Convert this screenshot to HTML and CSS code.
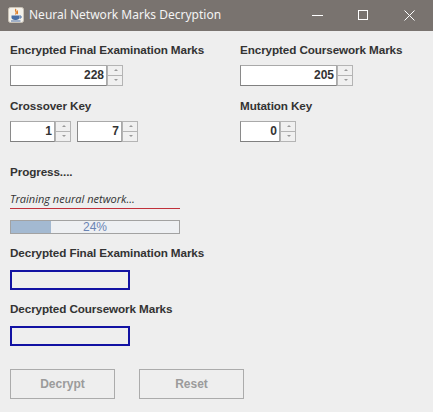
FILE: index.html
```html
<!DOCTYPE html>
<html>
<head>
<meta charset="utf-8">
<link rel="stylesheet" href="styles.css">
</head>
<body>
<div class="window">
  <div class="titlebar">
    <svg class="app-icon" width="16" height="16" viewBox="0 0 16 16">
      <rect x="0.5" y="0.5" width="15" height="15" rx="2" fill="#f4f1ea" stroke="#c9c2b6"/>
      <path d="M8 2 C6 4 10 5 7.5 7.5 M9.5 3.5 C8.5 5 10.5 5.5 9 7" stroke="#e07a20" stroke-width="1.2" fill="none"/>
      <path d="M3.5 8.5 H11.5 V10.5 C11.5 12 10 13 8 13 H7 C5 13 3.5 12 3.5 10.5 Z" fill="#4a6fa5"/>
      <path d="M11.5 9 H13 V11 H11.5" stroke="#4a6fa5" fill="none"/>
      <path d="M3 14 H12.5" stroke="#4a6fa5"/>
    </svg>
    <span class="title">Neural Network Marks Decryption</span>
    <div class="controls">
      <svg class="ctl" width="46" height="31" viewBox="0 0 46 31"><path d="M17 15.5 H28" stroke="#fff" stroke-width="1"/></svg>
      <svg class="ctl" width="46" height="31" viewBox="0 0 46 31"><rect x="17.5" y="10.5" width="9" height="9" stroke="#fff" fill="none"/></svg>
      <svg class="ctl" width="46" height="31" viewBox="0 0 46 31"><path d="M17.5 10.5 L27.5 20.5 M27.5 10.5 L17.5 20.5" stroke="#fff" fill="none"/></svg>
    </div>
  </div>
  <div class="content">
    <div class="grid">
      <div class="cell">
        <div class="label">Encrypted Final Examination Marks</div>
        <div class="spinner w113"><div class="sp-field">228</div><div class="sp-btns"><span class="sp-btn up"></span><span class="sp-btn down"></span></div></div>
      </div>
      <div class="cell">
        <div class="label">Encrypted Coursework Marks</div>
        <div class="spinner w113"><div class="sp-field">205</div><div class="sp-btns"><span class="sp-btn up"></span><span class="sp-btn down"></span></div></div>
      </div>
      <div class="cell row2">
        <div class="label">Crossover Key</div>
        <div class="pair">
          <div class="spinner w61"><div class="sp-field">1</div><div class="sp-btns"><span class="sp-btn up"></span><span class="sp-btn down"></span></div></div>
          <div class="spinner w61"><div class="sp-field">7</div><div class="sp-btns"><span class="sp-btn up"></span><span class="sp-btn down"></span></div></div>
        </div>
      </div>
      <div class="cell row2">
        <div class="label">Mutation Key</div>
        <div class="spinner w56"><div class="sp-field">0</div><div class="sp-btns"><span class="sp-btn up"></span><span class="sp-btn down"></span></div></div>
      </div>
    </div>

    <div class="label progress-label">Progress....</div>
    <div class="status">Training neural network...</div>
    <div class="progress"><div class="fill" style="width:24%"></div><span class="pct">24%</span></div>

    <div class="label dec-label">Decrypted Final Examination Marks</div>
    <div class="outbox"></div>
    <div class="label dec-label">Decrypted Coursework Marks</div>
    <div class="outbox"></div>

    <div class="buttons">
      <div class="btn">Decrypt</div>
      <div class="btn">Reset</div>
    </div>
  </div>
</div>
</body>
</html>
```
FILE: styles.css
```css
html, body {
  margin: 0;
  padding: 0;
  background: #eeeeee;
}
.window {
  width: 433px;
  height: 412px;
  background: #eeeeee;
  font-family: "Liberation Sans", Arial, sans-serif;
}
.titlebar {
  height: 31px;
  background: #79736f;
  display: flex;
  align-items: center;
}
.app-icon {
  margin-left: 8px;
  margin-right: 5px;
  margin-top: -1px;
}
.title {
  color: #f4f4f4;
  font-family: "Noto Sans", "Open Sans", sans-serif;
  font-size: 12px;
  margin-top: -2px;
}
.controls {
  margin-left: auto;
  display: flex;
}
.ctl { display: block; }
.content {
  padding: 0 10px;
}
.grid {
  display: grid;
  grid-template-columns: 230px 1fr;
  padding-top: 11px;
}
.row2 { margin-top: 12px; }
.label {
  font-size: 11.7px;
  line-height: 15px;
  font-weight: bold;
  color: #333333;
  white-space: nowrap;
  letter-spacing: -0.1px;
}
.spinner {
  margin-top: 8px;
  height: 21px;
  display: flex;
  box-sizing: border-box;
}
.w113 { width: 113px; }
.w61 { width: 61px; }
.w56 { width: 56px; }
.pair {
  display: flex;
  gap: 6px;
}
.sp-field {
  flex: 1;
  background: #ffffff;
  border: 1px solid #a9a9a9;
  border-bottom-color: #808080;
  border-left-color: #8a8a8a;
  box-sizing: border-box;
  text-align: right;
  font-size: 12px;
  font-weight: bold;
  color: #333333;
  line-height: 19px;
  padding-right: 2px;
}
.sp-btns {
  width: 16px;
  display: flex;
  flex-direction: column;
}
.sp-btn {
  flex: 1;
  border: 1px solid #b4b4b4;
  background: #f0f0f0;
  box-sizing: border-box;
  position: relative;
}
.sp-btn + .sp-btn { border-top: none; }
.sp-btn::after {
  content: "";
  position: absolute;
  left: 6px;
  width: 0;
  height: 0;
  border-left: 2px solid transparent;
  border-right: 2px solid transparent;
}
.sp-btn.up::after { top: 3px; border-bottom: 2px solid #9a9a9a; }
.sp-btn.down::after { top: 3px; border-top: 2px solid #9a9a9a; }
.progress-label { margin-top: 22px; }
.status {
  width: 170px;
  font-family: "Open Sans", "Noto Sans", sans-serif;
  font-style: italic;
  font-size: 11px;
  line-height: 15px;
  color: #333333;
  margin-top: 12px;
  padding-bottom: 2px;
  border-bottom: 1px solid #c0303a;
  white-space: nowrap;
}
.progress {
  margin-top: 11px;
  width: 170px;
  height: 14px;
  box-sizing: border-box;
  border: 1px solid #a2a2a2;
  background: #eef0f3;
  position: relative;
}
.fill {
  height: 100%;
  background: #a3b9d1;
}
.pct {
  position: absolute;
  left: 0;
  right: 0;
  top: -1px;
  text-align: center;
  font-size: 12px;
  line-height: 14px;
  color: #6a84b3;
}
.dec-label { margin-top: 11px; }
.outbox {
  margin-top: 10px;
  width: 120px;
  height: 20px;
  box-sizing: border-box;
  border: 2px solid #1212a3;
}
.buttons {
  display: flex;
  gap: 24px;
  margin-top: 23px;
}
.btn {
  width: 105px;
  height: 30px;
  box-sizing: border-box;
  border: 1px solid #ababab;
  display: flex;
  align-items: center;
  justify-content: center;
  font-size: 12px;
  font-weight: bold;
  color: #9b9b9b;
}
```
